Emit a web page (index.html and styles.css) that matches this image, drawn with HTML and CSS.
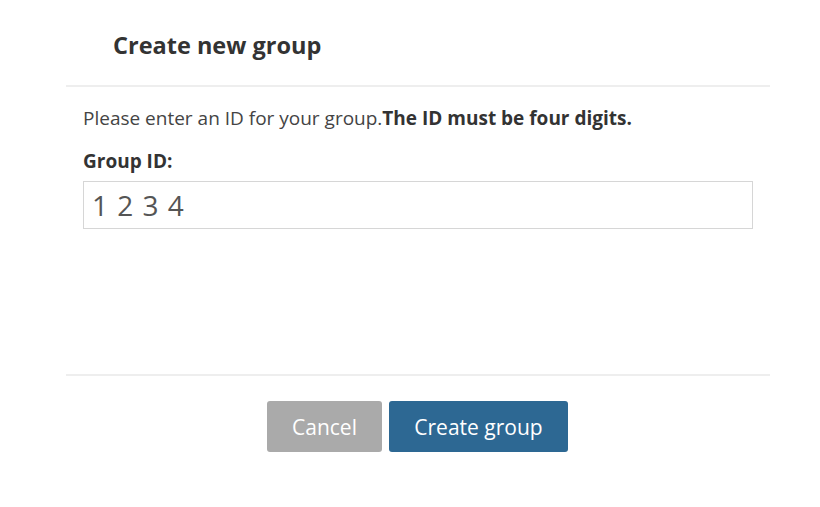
FILE: index.html
```html
<!DOCTYPE html>
<html>
<head>
<meta charset="utf-8">
<link rel="stylesheet" href="styles.css">
</head>
<body>
<div class="dialog">
  <div class="header">
    <h2 class="title">Create new group</h2>
  </div>
  <div class="content">
    <p class="intro">Please enter an ID for your group.<strong>The ID must be four digits.</strong></p>
    <label class="label" for="gid">Group ID:</label>
    <input id="gid" class="field" type="text" value="1 2 3 4">
  </div>
  <div class="footer">
    <button class="btn btn-cancel">Cancel</button>
    <button class="btn btn-primary">Create group</button>
  </div>
</div>
</body>
</html>
```
FILE: styles.css
```css
html, body {
  margin: 0;
  padding: 0;
  background: #fff;
}
body {
  font-family: "Open Sans", "Liberation Sans", sans-serif;
  color: #333;
}
.dialog {
  width: 704px;
  margin: 6px 0 0 66px;
  display: flex;
  flex-direction: column;
}
.header {
  height: 79px;
  border-bottom: 2px solid #eeeeee;
  display: flex;
  align-items: center;
  padding-left: 47px;
}
.title {
  margin: 0;
  font-size: 23.5px;
  font-weight: 700;
  color: #333;
  line-height: 30px;
  position: relative;
  top: -1px;
}
.content {
  height: 287px;
  padding: 17px 17px 0 17px;
  display: flex;
  flex-direction: column;
  align-items: flex-start;
  box-sizing: border-box;
}
.intro {
  margin: 0;
  font-size: 19px;
  line-height: 28px;
  color: #444;
}
.intro strong {
  color: #333;
}
.label {
  margin-top: 16px;
  font-size: 19px;
  font-weight: 700;
  line-height: 26px;
  color: #333;
}
.field {
  margin-top: 7px;
  width: 670px;
  height: 48px;
  box-sizing: border-box;
  border: 1px solid #d6d6d6;
  padding: 0 8px;
  font-family: "Open Sans", "Liberation Sans", sans-serif;
  font-size: 28px;
  letter-spacing: 1px;
  color: #555;
  outline: none;
}
.footer {
  border-top: 2px solid #eeeeee;
  padding: 25px 1px 22px 0;
  display: flex;
  justify-content: center;
  gap: 7px;
}
.btn {
  height: 51px;
  border: none;
  border-radius: 3px;
  font-family: "Open Sans", "Liberation Sans", sans-serif;
  font-size: 21px;
  color: #fff;
  padding: 0;
}
.btn-cancel {
  width: 115px;
  background: #aaaaaa;
}
.btn-primary {
  width: 179px;
  background: #2d6893;
}
```
